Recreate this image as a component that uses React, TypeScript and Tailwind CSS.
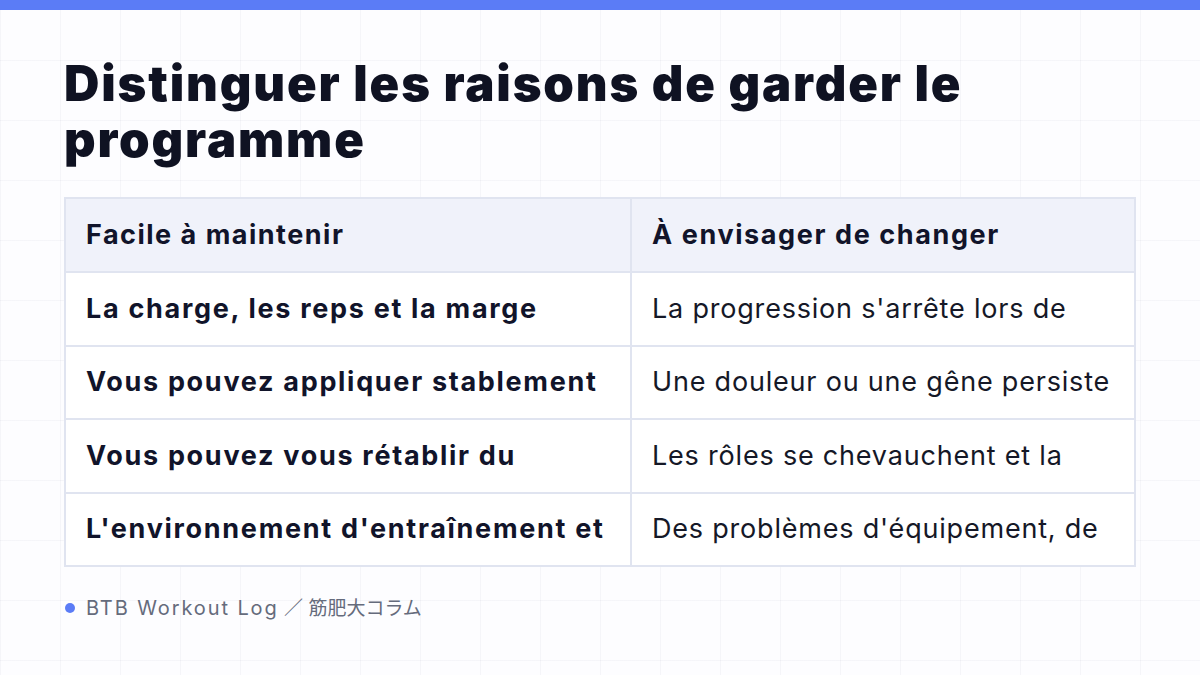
import React from "react";

const rows: [string, string][] = [
  ["La charge, les reps et la marge", "La progression s'arrête lors de"],
  ["Vous pouvez appliquer stablement", "Une douleur ou une gêne persiste"],
  ["Vous pouvez vous rétablir du", "Les rôles se chevauchent et la"],
  ["L'environnement d'entraînement et", "Des problèmes d'équipement, de"],
];

export default function App() {
  return (
    <div
      className="relative w-[1200px] h-[675px] overflow-hidden bg-[#fdfdff]"
      style={{
        fontFamily: 'Inter, "Noto Sans CJK JP", sans-serif',
        backgroundImage:
          "linear-gradient(to right, rgba(30,40,90,0.035) 1px, transparent 1px), linear-gradient(to bottom, rgba(30,40,90,0.035) 1px, transparent 1px)",
        backgroundSize: "60px 60px",
      }}
    >
      <div className="h-[10px] bg-[#5b7cf6]" />
      <div className="px-[64px] pt-[46px]">
        <h1 className="text-[49px] leading-[56px] font-black text-[#0f1222] tracking-[1.85px]">
          Distinguer les raisons de garder le
          <br />
          programme
        </h1>
        <div className="mt-[29px] w-[1072px] border-2 border-[#e0e4f0]">
          <div className="grid grid-cols-[566px_1fr] bg-[#f0f2fa]">
            <div className="h-[72px] flex items-center px-[20px] border-r-2 border-[#e0e4f0] text-[27px] font-bold text-[#11142a] tracking-[1.5px]">
              Facile à maintenir
            </div>
            <div className="h-[72px] flex items-center px-[20px] text-[27px] font-bold text-[#11142a] tracking-[1.6px]">
              À envisager de changer
            </div>
          </div>
          {rows.map(([a, b], i) => (
            <div key={i} className="grid grid-cols-[566px_1fr] border-t-2 border-[#e0e4f0] bg-white">
              <div className="h-[71.5px] flex items-center px-[20px] border-r-2 border-[#e0e4f0] text-[27px] font-bold text-[#11142a] tracking-[1.7px] whitespace-nowrap overflow-hidden">
                {a}
              </div>
              <div className="h-[71.5px] flex items-center px-[20px] text-[27px] font-normal text-[#151827] tracking-[0.8px] whitespace-nowrap overflow-hidden">
                {b}
              </div>
            </div>
          ))}
        </div>
        <div className="mt-[26px] flex items-center gap-[11px] text-[20px] text-[#656b7c]">
          <span className="w-[10px] h-[10px] rounded-full bg-[#5b7cf6] ml-[1px]" />
          <span>
            <span className="tracking-[1.9px]">BTB Workout Log</span>
            <span className="text-[19px] tracking-[0px]"> ／ 筋肥大コラム</span>
          </span>
        </div>
      </div>
    </div>
  );
}
